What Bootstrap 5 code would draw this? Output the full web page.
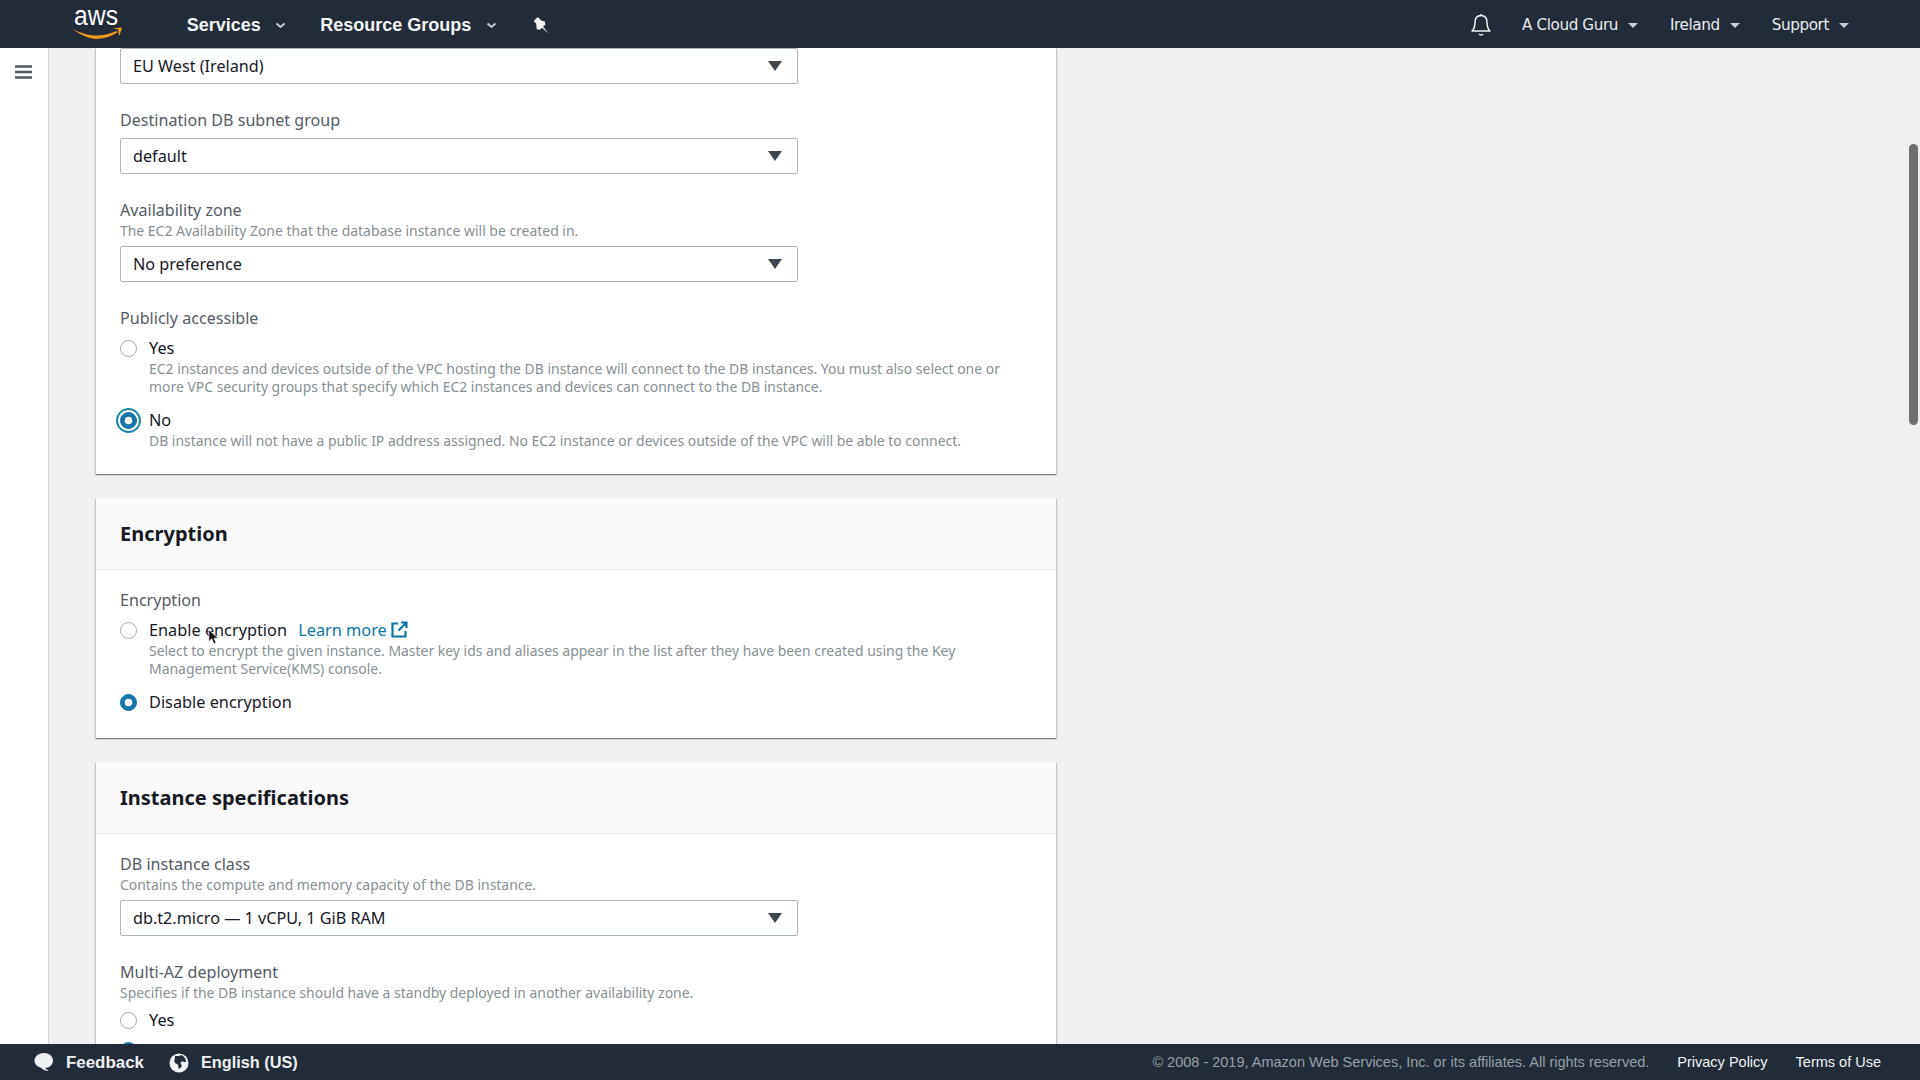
<!DOCTYPE html>
<html lang="en">
<head>
<meta charset="utf-8">
<title>RDS</title>
<link href="https://cdn.jsdelivr.net/npm/bootstrap@5.3.0/dist/css/bootstrap.min.css" rel="stylesheet">
<style>
html,body{height:100%;overflow:hidden}
body{font-family:"Noto Sans","Liberation Sans",sans-serif;background:#f0f0f0;color:#16191f}
.topbar{height:48px;background:#222b38;color:#fff;flex:none;padding:2px 71px 0 72px}
.aws-mark{width:52px;height:48px;margin:-2px 62.7px 0 0;display:block;flex:none}
.aws-word{font:400 27px "Liberation Sans",sans-serif;fill:#fff}
.prim{font:700 18px "Liberation Sans",sans-serif;color:#f2f3f3}
.prim+.prim{margin-left:34px}
.chev{width:11px;height:7px;margin-left:14.5px}
.pin{width:17px;height:17px;margin-left:36px}
.sec{font:400 15.2px "DejaVu Sans",sans-serif;letter-spacing:-.4px;color:#e9ebed}
.sec+.sec{margin-left:32px}
.caret{width:0;height:0;border-left:5px solid transparent;border-right:5px solid transparent;border-top:5px solid #c8ccd0;margin-left:10px}
.bell{width:22px;height:24px;margin-right:30px}
.mid{min-height:0;position:relative}
.rail{width:49px;background:#fff;border-right:1px solid #cfd3d6;flex:none;padding:17px 0 0 15px}
.burger{width:17px;height:14px;display:block}
.pane{padding:0 0 0 47px;overflow:hidden}
.panel{width:960px;background:#fff;margin-bottom:24px;box-shadow:0 1px 1px 0 rgba(0,28,36,.36),1px 1px 1px 0 rgba(0,28,36,.15),-1px 1px 1px 0 rgba(0,28,36,.15);border:0;border-radius:0}
.panel-head{height:72px;background:#fafafa;border-bottom:1px solid #eaeded;padding:0 24px}
.panel-head h2{font:700 20px "Noto Sans",sans-serif;margin:0;color:#16191f}
.panel-body{padding:0 24px 24px}
.panel-body.enc-body{padding-top:19px;padding-bottom:25px}
.panel-body.spec-body{padding-top:19px}
.fld-label{font-size:16.1px;line-height:22px;color:#545b64;margin:0}
.fld-help{font-size:13.95px;line-height:18px;color:#879093;margin:1px 0 0}
.pick{width:678px;height:36px;font-size:16.2px;line-height:22px;padding:0 12px;color:#16191f;border:1px solid #aab7b8;border-radius:2px;--bs-form-select-bg-img:none;background-image:none}
.pick-wrap{width:678px;position:relative}
.pick-arrow{position:absolute;right:16px;top:13px;width:14px;height:10px;pointer-events:none}
.opt{display:flex;padding:0;margin:0;min-height:0}
.opt .form-check-input{float:none;margin:3px 12px 0 0;width:17px;height:17px;flex:none;border:1px solid #a0a8aa;box-shadow:none}
.opt .form-check-input:checked{background-color:#1576ad;border-color:#1576ad;background-size:100%}
.opt .form-check-input.ringed{box-shadow:0 0 0 2px #fff,0 0 0 4px #1a8aa8}
.opt-text{font-size:16.3px;line-height:22px;color:#16191f}
.opt-sub{padding-left:29px}
.ext{color:#0f73a8;text-decoration:none;margin-left:7px}
.ext svg{width:17px;height:17px;vertical-align:-2px}
.bottombar{height:36px;background:#222b38;flex:none;padding:1px 39px 0 33px;font-family:"Liberation Sans",sans-serif}
.foot-main{font-weight:700;font-size:16.9px;color:#eef0f1}
.foot-main+.foot-main{font-size:16.3px}
.foot-main svg{width:22px;height:22px;margin-right:11px}
.foot-legal{font-size:14.5px;color:#97a0a6}
.foot-link{font-size:14.5px;color:#f2f3f3;text-decoration:none;margin-left:28px}
.thumb{position:absolute;left:1909px;top:96px;width:9px;height:281px;border-radius:5px;background:#6f6f6f}
.pointer{position:absolute;left:208px;top:580px;width:11px;height:18px}
.s6{margin-top:6px}.s7{margin-top:7px}.s8{margin-top:8px}.s13{margin-top:13px}
.s25{margin-top:25px}
</style>
</head>
<body class="d-flex flex-column">
<nav class="topbar d-flex align-items-center">
  <svg class="aws-mark" viewBox="0 0 52 48"><text class="aws-word" x="2" y="25" textLength="44" lengthAdjust="spacingAndGlyphs">aws</text><path d="M.5 29C10 36 19 39.500 27 38.800 34 38.300 40 36 45.500 32.600L44.500 31C36 34.500 29 36 22 35.500 14 35 7 32 .5 29z" fill="#f2991f"/><path d="M41 28.200l9-.8-2.600 8.600c-.8-2-1-4.500-1.200-6.500-1.600-.3-3.300-.6-5.200-1.300z" fill="#f2991f"/></svg>
  <div class="prim d-flex align-items-center">Services<svg class="chev" viewBox="0 0 11 7"><path d="M1.500 1.500l4 3.500 4-3.500" fill="none" stroke="#c8ccd0" stroke-width="2"/></svg></div>
  <div class="prim d-flex align-items-center">Resource Groups<svg class="chev" viewBox="0 0 11 7"><path d="M1.500 1.500l4 3.500 4-3.500" fill="none" stroke="#c8ccd0" stroke-width="2"/></svg></div>
  <svg class="pin" viewBox="0 0 16 16"><path d="M4.500 0L.5 4 3 6l.5 5.500 3 .5 2-2 6 5.500-5-6.500 2.200-1.800-.7-3.200-3-.5z" fill="#f2f3f3"/></svg>
  <div class="ms-auto d-flex align-items-center">
    <svg class="bell" viewBox="0 0 22 24"><path d="M11 2.500c-4 0-6 3-6 7 0 4-1 6.500-3 8.500h18c-2-2-3-4.500-3-8.500 0-4-2-7-6-7zM9 21c.8 1.400 3.200 1.400 4 0" fill="none" stroke="#f2f3f3" stroke-width="1.500" stroke-linejoin="round"/><circle cx="11" cy="2" r="1" fill="#f2f3f3"/></svg>
    <div class="sec d-flex align-items-center">A Cloud Guru<span class="caret"></span></div>
    <div class="sec d-flex align-items-center">Ireland<span class="caret"></span></div>
    <div class="sec d-flex align-items-center">Support<span class="caret"></span></div>
  </div>
</nav>
<div class="mid flex-grow-1 d-flex">
  <aside class="rail"><svg class="burger" viewBox="0 0 17 14"><path d="M0 1.500h17M0 7h17M0 12.500h17" stroke="#545b64" stroke-width="2.300"/></svg></aside>
  <main class="pane flex-grow-1">
    <section class="card panel">
      <div class="panel-body">
        <div class="pick-wrap"><select class="form-select pick"><option>EU West (Ireland)</option></select><svg class="pick-arrow" viewBox="0 0 14 10"><path d="M0 0h14L7 10z" fill="#3f464d"/></svg></div>
        <p class="fld-label s25">Destination DB subnet group</p>
        <div class="pick-wrap s7"><select class="form-select pick"><option>default</option></select><svg class="pick-arrow" viewBox="0 0 14 10"><path d="M0 0h14L7 10z" fill="#3f464d"/></svg></div>
        <p class="fld-label s25">Availability zone</p>
        <p class="fld-help">The EC2 Availability Zone that the database instance will be created in.</p>
        <div class="pick-wrap s6"><select class="form-select pick"><option>No preference</option></select><svg class="pick-arrow" viewBox="0 0 14 10"><path d="M0 0h14L7 10z" fill="#3f464d"/></svg></div>
        <p class="fld-label s25">Publicly accessible</p>
        <label class="form-check opt s8"><input class="form-check-input" type="radio" name="pub"><span class="opt-text">Yes</span></label>
        <p class="fld-help opt-sub">EC2 instances and devices outside of the VPC hosting the DB instance will connect to the DB instances. You must also select one or<br>more VPC security groups that specify which EC2 instances and devices can connect to the DB instance.</p>
        <label class="form-check opt s13"><input class="form-check-input ringed" type="radio" name="pub" checked><span class="opt-text">No</span></label>
        <p class="fld-help opt-sub">DB instance will not have a public IP address assigned. No EC2 instance or devices outside of the VPC will be able to connect.</p>
      </div>
    </section>
    <section class="card panel">
      <div class="panel-head d-flex align-items-center"><h2>Encryption</h2></div>
      <div class="panel-body enc-body">
        <p class="fld-label">Encryption</p>
        <label class="form-check opt s8"><input class="form-check-input" type="radio" name="enc"><span class="opt-text">Enable encryption <a class="ext" href="#">Learn more <svg viewBox="0 0 17 17"><path d="M7 2.500H1.500v13h13V10M10 1.500h5.500V7M15 2l-7.500 7.500" fill="none" stroke="#0f73a8" stroke-width="2.200"/></svg></a></span></label>
        <p class="fld-help opt-sub">Select to encrypt the given instance. Master key ids and aliases appear in the list after they have been created using the Key<br>Management Service(KMS) console.</p>
        <label class="form-check opt s13"><input class="form-check-input" type="radio" name="enc" checked><span class="opt-text">Disable encryption</span></label>
      </div>
    </section>
    <section class="card panel">
      <div class="panel-head d-flex align-items-center"><h2>Instance specifications</h2></div>
      <div class="panel-body spec-body">
        <p class="fld-label">DB instance class</p>
        <p class="fld-help">Contains the compute and memory capacity of the DB instance.</p>
        <div class="pick-wrap s6"><select class="form-select pick"><option>db.t2.micro — 1 vCPU, 1 GiB RAM</option></select><svg class="pick-arrow" viewBox="0 0 14 10"><path d="M0 0h14L7 10z" fill="#3f464d"/></svg></div>
        <p class="fld-label s25">Multi-AZ deployment</p>
        <p class="fld-help">Specifies if the DB instance should have a standby deployed in another availability zone.</p>
        <label class="form-check opt s7"><input class="form-check-input" type="radio" name="az"><span class="opt-text">Yes</span></label>
        <label class="form-check opt s8"><input class="form-check-input" type="radio" name="az" checked></label>
      </div>
    </section>
  </main>
  <div class="thumb"></div>
  <svg class="pointer" viewBox="0 0 13 19"><path d="M1 1v14l3.500-3.300 2.500 5.800 2.500-1-2.500-5.500H12z" fill="#111" stroke="#fff" stroke-width=".8"/></svg>
</div>
<footer class="bottombar d-flex align-items-center">
  <div class="foot-main d-flex align-items-center"><svg viewBox="0 0 22 22"><path d="M11 2c5 0 9 3 9 7.500S16 17 12 17c1 1 2.500 2 4 2.500-3 .5-6-.5-8-2.800C4.500 16 1.500 13.500 1.500 9.500 1.500 5 6 2 11 2z" fill="#eef0f1"/></svg>Feedback</div>
  <div class="foot-main d-flex align-items-center ms-4"><svg viewBox="0 0 22 22"><circle cx="11" cy="11" r="9.500" fill="#eef0f1"/><path d="M7 3.500c2 1 5 .5 6-.5 3 1 5 4 5 7-1.500.5-3-1-4.500-.5-1.500 1-1 3 .5 4-1 2-2 3-3 3.500-1-2 0-4-2-5-2-.5-3-2-2.500-4 .5-1.500.5-3 .5-4.500z" fill="#222b38"/></svg>English (US)</div>
  <div class="ms-auto d-flex align-items-center"><span class="foot-legal">© 2008 - 2019, Amazon Web Services, Inc. or its affiliates. All rights reserved.</span><a class="foot-link" href="#">Privacy Policy</a><a class="foot-link" href="#">Terms of Use</a></div>
</footer>
</body>
</html>
